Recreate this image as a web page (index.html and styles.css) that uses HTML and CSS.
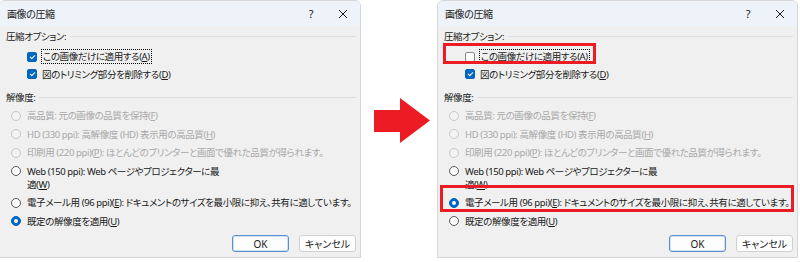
FILE: index.html
```html
<!DOCTYPE html>
<html lang="ja">
<head>
  <meta charset="UTF-8" />
  <title>画像の圧縮</title>
  <link rel="stylesheet" href="styles.css">
</head>
<body>
  <div class="page">
    <!-- Before -->
    <section class="dialog dialog-left">
      <div class="titlebar">
        <span class="title">画像の圧縮</span>
        <span class="help">?</span>
        <svg class="close" width="10" height="10" viewBox="0 0 10 10">
          <path d="M1 1L9 9M9 1L1 9" stroke="#1a1a1a" stroke-width="1" fill="none"/>
        </svg>
      </div>
      <div class="body">
        <div class="group-label"><span>圧縮オプション:</span></div>
        <div class="checks">
          <div class="check-row"><span class="box checked"></span><span class="focus">この画像だけに適用する(<u>A</u>)</span></div>
          <div class="check-row"><span class="box checked"></span><span>図のトリミング部分を削除する(<u>D</u>)</span></div>
        </div>
        <div class="group-label res"><span>解像度:</span></div>
        <div class="radios">
          <div class="radio-row disabled"><span class="dot"></span><span>高品質: 元の画像の品質を保持(<u>F</u>)</span></div>
          <div class="radio-row disabled"><span class="dot"></span><span>HD (330 ppi): 高解像度 (HD) 表示用の高品質(<u>H</u>)</span></div>
          <div class="radio-row disabled"><span class="dot"></span><span>印刷用 (220 ppi)(<u>P</u>): ほとんどのプリンターと画面で優れた品質が得られます。</span></div>
          <div class="radio-row"><span class="dot"></span><span>Web (150 ppi): Web ページやプロジェクターに最<br>適(<u>W</u>)</span></div>
          <div class="radio-row"><span class="dot"></span><span>電子メール用 (96 ppi)(<u>E</u>): ドキュメントのサイズを最小限に抑え、共有に適しています。</span></div>
          <div class="radio-row"><span class="dot on"></span><span>既定の解像度を適用(<u>U</u>)</span></div>
        </div>
        <div class="buttons">
          <button class="btn default">OK</button>
          <button class="btn">キャンセル</button>
        </div>
      </div>
    </section>

    <div class="arrow">
      <svg width="56" height="45" viewBox="0 0 56 45">
        <polygon points="0,12 26,12 26,0 56,22.5 26,45 26,34 0,34" fill="#ed1c24"/>
      </svg>
    </div>

    <!-- After -->
    <section class="dialog dialog-right">
      <div class="titlebar">
        <span class="title">画像の圧縮</span>
        <span class="help">?</span>
        <svg class="close" width="10" height="10" viewBox="0 0 10 10">
          <path d="M1 1L9 9M9 1L1 9" stroke="#1a1a1a" stroke-width="1" fill="none"/>
        </svg>
      </div>
      <div class="body">
        <div class="group-label"><span>圧縮オプション:</span></div>
        <div class="checks">
          <div class="check-row"><span class="box"></span><span class="focus">この画像だけに適用する(<u>A</u>)</span></div>
          <div class="check-row"><span class="box checked"></span><span>図のトリミング部分を削除する(<u>D</u>)</span></div>
        </div>
        <div class="group-label res"><span>解像度:</span></div>
        <div class="radios">
          <div class="radio-row disabled"><span class="dot"></span><span>高品質: 元の画像の品質を保持(<u>F</u>)</span></div>
          <div class="radio-row disabled"><span class="dot"></span><span>HD (330 ppi): 高解像度 (HD) 表示用の高品質(<u>H</u>)</span></div>
          <div class="radio-row disabled"><span class="dot"></span><span>印刷用 (220 ppi)(<u>P</u>): ほとんどのプリンターと画面で優れた品質が得られます。</span></div>
          <div class="radio-row"><span class="dot"></span><span>Web (150 ppi): Web ページやプロジェクターに最<br>適(<u>W</u>)</span></div>
          <div class="radio-row"><span class="dot on"></span><span>電子メール用 (96 ppi)(<u>E</u>): ドキュメントのサイズを最小限に抑え、共有に適しています。</span></div>
          <div class="radio-row"><span class="dot"></span><span>既定の解像度を適用(<u>U</u>)</span></div>
        </div>
        <div class="buttons">
          <button class="btn default">OK</button>
          <button class="btn">キャンセル</button>
        </div>
      </div>
      <div class="mark mark-check"></div>
      <div class="mark mark-radio"></div>
    </section>
  </div>
</body>
</html>
```

FILE: styles.css
```css
:root {
  --title-bg: #eef3f9;
  --body-bg: #f0f0f0;
  --text: #1a1a1a;
  --text-disabled: #a8a8a8;
  --accent: #0067c0;
  --line: #dcdcdc;
  --red: #ed1c24;
}

* {
  margin: 0;
  padding: 0;
  box-sizing: border-box;
}

body {
  background: #ffffff;
  font-family: "Noto Sans", "Noto Sans CJK JP", sans-serif;
  font-feature-settings: "palt";
  font-size: 9.5px;
  letter-spacing: -0.4px;
  color: var(--text);
}

.page {
  display: flex;
  align-items: flex-start;
  height: 262px;
  overflow: hidden;
}

.dialog {
  position: relative;
  width: 361px;
  height: 258px;
  background: var(--body-bg);
  border: 1px solid #d6d6d6;
  border-radius: 6px 6px 0 0;
  overflow: hidden;
}

.dialog-left {
  margin-left: -1px;
  width: 362px;
}

.titlebar {
  height: 25px;
  background: var(--title-bg);
  display: flex;
  align-items: center;
  padding: 0 12px 0 7px;
}

.title {
  flex: 1;
  font-size: 10px;
}

.help {
  font-size: 11px;
  margin-right: 25px;
}

.body {
  padding: 3px 4px 0 6px;
}

.group-label {
  display: flex;
  align-items: center;
  gap: 4px;
  height: 14px;
}

.group-label::after {
  content: "";
  flex: 1;
  height: 1px;
  background: var(--line);
}

.group-label.res {
  margin-top: 8px;
}

.checks {
  margin-top: 5px;
  padding-left: 21px;
}

.check-row {
  display: flex;
  align-items: center;
  gap: 5px;
  height: 17px;
  white-space: nowrap;
}

.box {
  width: 10px;
  height: 10px;
  border: 1px solid #8a8a8a;
  border-radius: 2px;
  background: #fdfdfd;
  position: relative;
}

.box.checked {
  background: var(--accent);
  border-color: var(--accent);
}

.box.checked::after {
  content: "";
  position: absolute;
  left: 2px;
  top: 1px;
  width: 4px;
  height: 2px;
  border-left: 1px solid #fff;
  border-bottom: 1px solid #fff;
  transform: translate(0, 1px) rotate(-45deg);
}

.focus {
  outline: 1px dotted #000;
  outline-offset: 0;
  padding: 0 1px;
  line-height: 13px;
}

.radios {
  margin-top: 2px;
  padding-left: 5px;
}

.radio-row {
  display: flex;
  align-items: flex-start;
  gap: 6px;
  padding: 3px 0 2.5px;
  line-height: 13px;
  white-space: nowrap;
}

.radio-row.disabled {
  color: var(--text-disabled);
}

.dot {
  flex: none;
  width: 10px;
  height: 10px;
  margin-top: 1.5px;
  border: 1px solid #5a5a5a;
  border-radius: 50%;
  background: #fbfbfb;
  position: relative;
}

.disabled .dot {
  border-color: #c8c8c8;
  background: #f3f3f3;
}

.dot.on {
  background: var(--accent);
  border-color: var(--accent);
}

.dot.on::after {
  content: "";
  position: absolute;
  left: 2px;
  top: 2px;
  width: 4px;
  height: 4px;
  border-radius: 50%;
  background: #fff;
}

.buttons {
  display: flex;
  justify-content: flex-end;
  gap: 10px;
  margin-top: 5px;
}

.btn {
  width: 57px;
  height: 17px;
  font: inherit;
  font-size: 10px;
  color: var(--text);
  background: #fdfdfd;
  border: 1px solid #d0d0d0;
  border-radius: 3px;
}

.btn.default {
  border-color: #5b8fcf;
  box-shadow: inset 0 0 0 1px #cfe0f3;
}

.arrow {
  width: 76px;
  padding-left: 13px;
  margin-top: 98px;
}

.arrow svg {
  display: block;
}

.mark {
  position: absolute;
  border: 3px solid var(--red);
}

.mark-check {
  left: 5px;
  top: 42px;
  width: 153px;
  height: 21px;
}

.mark-radio {
  left: 2px;
  top: 184px;
  width: 354px;
  height: 27px;
}
```
